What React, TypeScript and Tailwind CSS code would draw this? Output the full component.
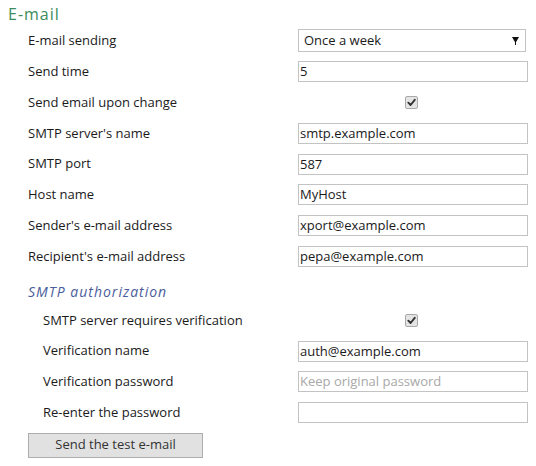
import React from "react";

const font = { fontFamily: '"Open Sans", "Noto Sans", Arial, sans-serif' };

function Check() {
  return (
    <span className="flex h-[13px] w-[13px] items-center justify-center rounded-[2px] border border-[#a9a9a9] bg-[#e4e4e4]">
      <svg width="9" height="9" viewBox="0 0 10 10">
        <path d="M1.5 5.2 L4 7.8 L8.6 2" fill="none" stroke="#333" strokeWidth="2.1" strokeLinecap="round" strokeLinejoin="round" />
      </svg>
    </span>
  );
}

function TextBox({ value, placeholder }: { value?: string; placeholder?: string }) {
  return (
    <div className="flex h-[21px] w-[230px] items-center border border-[#c3c3c3] bg-white pl-[1px] text-[13px] leading-none">
      {value ? (
        <span className="text-[#1a1a1a]">{value}</span>
      ) : (
        <span className="text-[#a8a8a8]">{placeholder}</span>
      )}
    </div>
  );
}

type Row = { label: string; control: React.ReactNode };

function FormRow({ label, control, indent }: Row & { indent: boolean }) {
  return (
    <div className={`flex h-[30.8px] items-center pt-[1px] ${indent ? "pl-[43px]" : "pl-[28px]"}`}>
      <div className={`${indent ? "w-[255px]" : "w-[270px]"} text-[13px] text-[#1a1a1a]`}>{label}</div>
      <div className="flex w-[230px] items-center">{control}</div>
    </div>
  );
}

export default function App() {
  const main: Row[] = [
    {
      label: "E-mail sending",
      control: (
        <div className="flex h-[23px] w-[228px] items-center justify-between border border-[#c3c3c3] bg-white pl-[5px] pr-[6px] text-[13px] text-[#1a1a1a]">
          <span>Once a week</span>
          <svg width="7" height="8" viewBox="0 0 7 8">
            <path d="M0 0 H7 L3.5 6 Z M3 5 H4 V8 H3 Z" fill="#111" />
          </svg>
        </div>
      ),
    },
    { label: "Send time", control: <TextBox value="5" /> },
    {
      label: "Send email upon change",
      control: (
        <div className="flex w-[230px] justify-center pr-[4px]">
          <Check />
        </div>
      ),
    },
    { label: "SMTP server's name", control: <TextBox value="smtp.example.com" /> },
    { label: "SMTP port", control: <TextBox value="587" /> },
    { label: "Host name", control: <TextBox value="MyHost" /> },
    { label: "Sender's e-mail address", control: <TextBox value="xport@example.com" /> },
    { label: "Recipient's e-mail address", control: <TextBox value="pepa@example.com" /> },
  ];

  const auth: Row[] = [
    {
      label: "SMTP server requires verification",
      control: (
        <div className="flex w-[230px] justify-center pr-[4px]">
          <Check />
        </div>
      ),
    },
    { label: "Verification name", control: <TextBox value="auth@example.com" /> },
    { label: "Verification password", control: <TextBox placeholder="Keep original password" /> },
    { label: "Re-enter the password", control: <TextBox /> },
  ];

  return (
    <div className="h-[466px] w-[536px] bg-white" style={font}>
      <div className="flex h-[25px] items-center pl-[8px] pt-[2px] text-[16px] tracking-[1px] text-[#3c8c5c]">E-mail</div>
      {main.map((r) => (
        <FormRow key={r.label} {...r} indent={false} />
      ))}
      <div className="flex h-[33px] items-center pl-[28px] pt-[8px] text-[14px] italic tracking-[1px] text-[#4a5d9c]">
        SMTP authorization
      </div>
      {auth.map((r) => (
        <FormRow key={r.label} {...r} indent={true} />
      ))}
      <div className="pl-[28px] pt-[5px]">
        <button className="flex h-[25px] w-[175px] items-center justify-center border border-[#adadad] bg-[#e1e1e1] text-[13px] text-[#333]">
          Send the test e-mail
        </button>
      </div>
    </div>
  );
}
